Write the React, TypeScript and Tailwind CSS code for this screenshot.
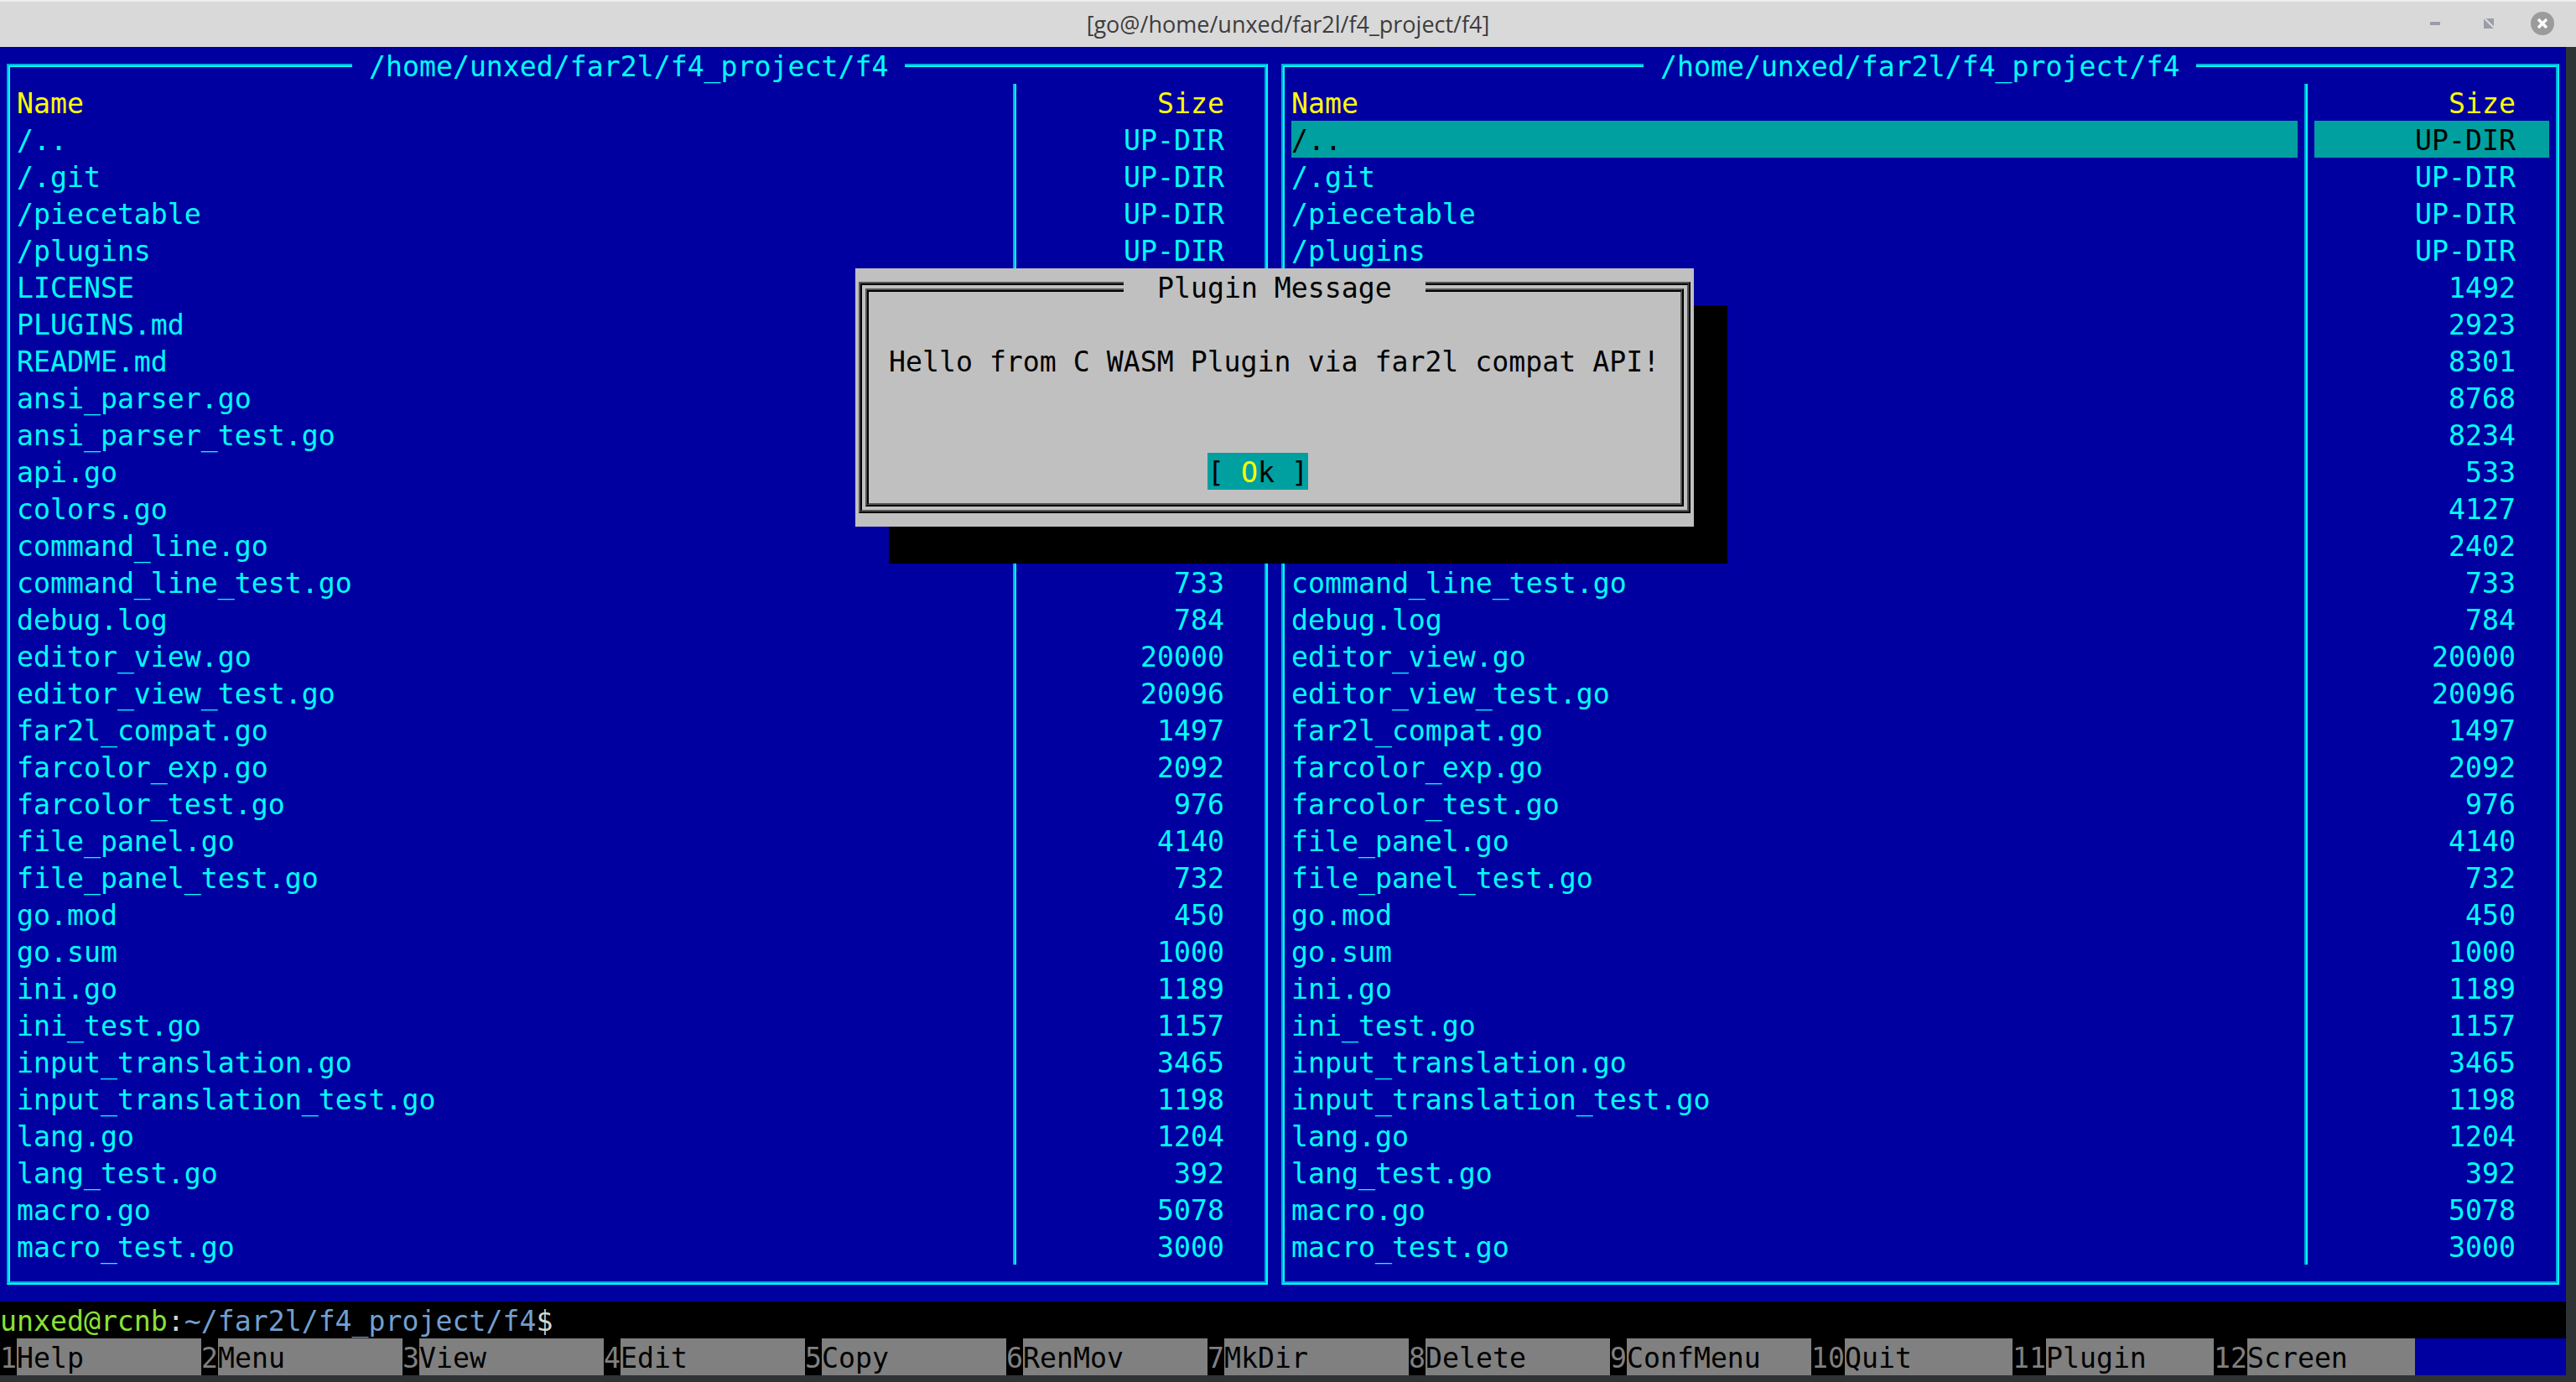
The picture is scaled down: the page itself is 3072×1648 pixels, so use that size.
const files = [
  ["/..", "UP-DIR"],
  ["/.git", "UP-DIR"],
  ["/piecetable", "UP-DIR"],
  ["/plugins", "UP-DIR"],
  ["LICENSE", "1492"],
  ["PLUGINS.md", "2923"],
  ["README.md", "8301"],
  ["ansi_parser.go", "8768"],
  ["ansi_parser_test.go", "8234"],
  ["api.go", "533"],
  ["colors.go", "4127"],
  ["command_line.go", "2402"],
  ["command_line_test.go", "733"],
  ["debug.log", "784"],
  ["editor_view.go", "20000"],
  ["editor_view_test.go", "20096"],
  ["far2l_compat.go", "1497"],
  ["farcolor_exp.go", "2092"],
  ["farcolor_test.go", "976"],
  ["file_panel.go", "4140"],
  ["file_panel_test.go", "732"],
  ["go.mod", "450"],
  ["go.sum", "1000"],
  ["ini.go", "1189"],
  ["ini_test.go", "1157"],
  ["input_translation.go", "3465"],
  ["input_translation_test.go", "1198"],
  ["lang.go", "1204"],
  ["lang_test.go", "392"],
  ["macro.go", "5078"],
  ["macro_test.go", "3000"],
];

const keys = [
  ["1", "Help"],
  ["2", "Menu"],
  ["3", "View"],
  ["4", "Edit"],
  ["5", "Copy"],
  ["6", "RenMov"],
  ["7", "MkDir"],
  ["8", "Delete"],
  ["9", "ConfMenu"],
  ["10", "Quit"],
  ["11", "Plugin"],
  ["12", "Screen"],
];

function Panel({ width, titleLeft, active }: { width: string; titleLeft: string; active?: boolean }) {
  return (
    <div className={`relative ${width} border-t-2 border-l-2 border-r-2 border-b-2 border-t-[#00aadc] border-l-[#00aadc] border-r-[#00ffff] border-b-[#00ffff]`}>
      <div className={`absolute top-[-22px] h-11 ${titleLeft} bg-[#0000a0] px-5 text-[#00ffff]`}>
        /home/unxed/far2l/f4_project/f4
      </div>
      <div className="flex border-t-2 border-l-2 border-r-2 border-b-2 border-t-[#00ffff] border-l-[#00ffff] border-r-[#00aadc] border-b-[#00aadc] pt-5 pb-5">
        {/* names */}
        <div className="ml-2 flex-1">
          <div className="h-11 text-[#ffff00]">Name</div>
          {files.map((f, i) => (
            <div key={i} className={`h-11 ${active && i === 0 ? "bg-[#00a0a0] text-black" : "text-[#00ffff]"}`}>
              {f[0]}
            </div>
          ))}
        </div>
        {/* separator */}
        <div className="mx-2 w-1 border-l-2 border-r-2 border-l-[#00aadc] border-r-[#00ffff]"></div>
        {/* sizes */}
        <div className="mr-2 w-[280px] text-right">
          <div className="h-11 pr-10 text-[#ffff00]">Size</div>
          {files.map((f, i) => (
            <div key={i} className={`h-11 pr-10 ${active && i === 0 ? "bg-[#00a0a0] text-black" : "text-[#00ffff]"}`}>
              {f[1]}
            </div>
          ))}
        </div>
      </div>
    </div>
  );
}

function Dialog() {
  return (
    <div className="absolute left-[1020px] top-[320px] h-[308px] w-[1000px] bg-[#c0c0c0] p-1 pt-4 shadow-[40px_44px_0_0_#000] text-black">
      <div className="absolute left-[320px] top-0 h-11 bg-[#c0c0c0] px-10">Plugin Message</div>
      <div className="h-[276px] w-[992px] border-2 border-t-[#555555] border-l-[#555555] border-r-black border-b-black">
        <div className="h-full border-2 border-t-black border-l-black border-r-[#555555] border-b-[#555555] p-1">
          <div className="h-full border-2 border-t-[#555555] border-l-[#555555] border-r-black border-b-black">
            <div className="h-full border-2 border-t-black border-l-black border-r-[#555555] border-b-[#555555] pl-6 pt-[60px]">
              <div className="h-11">Hello from C WASM Plugin via far2l compat API!</div>
              <div className="ml-[380px] mt-[88px] h-11 w-[120px] bg-[#00a0a0]">
                [ <span className="text-[#ffff00]">O</span>k ]
              </div>
            </div>
          </div>
        </div>
      </div>
    </div>
  );
}

export default function App() {
  return (
    <div className="relative flex h-[1648px] w-[3072px] flex-col overflow-hidden bg-[#2e3436] font-['DejaVu_Sans_Mono','Liberation_Mono',monospace] text-[33.2px] leading-[48px] whitespace-pre">
      {/* window title bar */}
      <div className="relative flex h-14 items-center justify-center border-t-2 border-[#ededed] bg-[#d9d9d9] font-['Open_Sans','Noto_Sans',sans-serif] text-[27px] leading-normal text-[#3d3d3d]">
        <span>[go@/home/unxed/far2l/f4_project/f4]</span>
        <div className="absolute right-[26px] top-[12px] flex items-center">
          <div className="mr-[52px] h-1 w-3 bg-[#9a9da6]"></div>
          <svg className="mr-[44px]" width="12" height="12" viewBox="0 0 12 12">
            <rect width="12" height="12" fill="#9a9da6" />
            <path d="M1 0 L12 11" stroke="#d9d9d9" strokeWidth="2.4" />
          </svg>
          <svg width="28" height="28" viewBox="0 0 28 28">
            <circle cx="14" cy="14" r="14" fill="#9b9b9b" />
            <path d="M9 9 L19 19 M19 9 L9 19" stroke="#ffffff" strokeWidth="3.4" />
          </svg>
        </div>
      </div>

      <div className="w-[3060px]">
        {/* panels */}
        <div className="flex h-[1496px] gap-4 bg-[#0000a0] px-2 pt-5">
          <Panel width="h-[1456px] w-[1504px]" titleLeft="left-[410px]" />
          <Panel width="h-[1456px] w-[1524px]" titleLeft="left-[430px]" active />
        </div>

        {/* command line */}
        <div className="h-11 bg-black">
          <span className="text-[#8ae234]">unxed@rcnb</span>
          <span className="text-[#d3d7cf]">:</span>
          <span className="text-[#729fcf]">~/far2l/f4_project/f4</span>
          <span className="text-[#d3d7cf]">$</span>
        </div>

        {/* key bar */}
        <div className="flex h-11 bg-[#0000a0]">
          {keys.map((k) => (
            <div key={k[0]} className="flex w-[240px]">
              <span className="bg-black text-[#808080]">{k[0]}</span>
              <span className="flex-1 bg-[#808080] text-black">{k[1]}</span>
            </div>
          ))}
        </div>
      </div>

      <Dialog />
    </div>
  );
}
